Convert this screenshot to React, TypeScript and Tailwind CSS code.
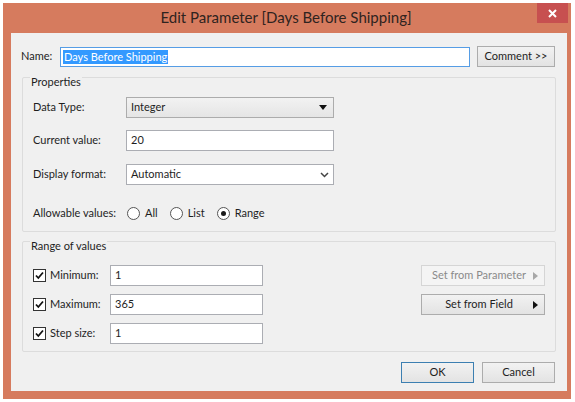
import React from 'react';

const font = { fontFamily: 'Lato, "Noto Sans", sans-serif' };

function TextBox({ value, className = '' }: { value: string; className?: string }) {
  return (
    <div className={`h-[21px] bg-white border border-[#abadb3] flex items-center pl-[4px] text-[#1e1e1e] ${className}`}>
      {value}
    </div>
  );
}

function Check({ label }: { label: string }) {
  return (
    <div className="flex items-center w-[77px] shrink-0 whitespace-nowrap">
      <div className="w-[13px] h-[13px] border border-[#333] bg-white flex items-center justify-center">
        <svg width="11" height="11" viewBox="0 0 11 11">
          <path d="M2 5.5 L4.3 8 L9 2.5" fill="none" stroke="#111" strokeWidth="1.8" />
        </svg>
      </div>
      <span className="ml-[4px]">{label}</span>
    </div>
  );
}

function Radio({ label, checked }: { label: string; checked?: boolean }) {
  return (
    <div className="flex items-center mr-[12px] whitespace-nowrap">
      <div className="w-[13px] h-[13px] rounded-full border border-[#555] bg-white flex items-center justify-center">
        {checked && <div className="w-[5px] h-[5px] rounded-full bg-[#1a1a1a]" />}
      </div>
      <span className="ml-[5px]">{label}</span>
    </div>
  );
}

function Btn({ children, className = '' }: { children: React.ReactNode; className?: string }) {
  return (
    <div
      className={`h-[21px] flex items-center justify-center border whitespace-nowrap bg-gradient-to-b from-[#f2f2f2] to-[#e3e3e3] ${className}`}
    >
      {children}
    </div>
  );
}

function Group({ title, className = '', children }: { title: string; className?: string; children: React.ReactNode }) {
  return (
    <div className={`relative border border-[#dcdcdc] rounded-[2px] ${className}`}>
      <span className="absolute left-[7px] -top-[4px] bg-[#f0f0f0] px-[1px] text-[#1e1e1e] whitespace-nowrap">{title}</span>
      {children}
    </div>
  );
}

export default function App() {
  return (
    <div className="w-[575px] h-[402px] bg-white overflow-hidden text-[11px] text-[#1e1e1e]" style={font}>
      <div className="ml-[3px] mt-[3px] w-[568px] h-[396px] bg-[#d67b5e] flex flex-col pl-[8px] pr-[4px] pb-[8px]">
        {/* title bar */}
        <div className="h-[30px] flex items-center relative -mr-[1px]">
          <div className="flex-1 text-center text-[15px] text-[#2e2320] -ml-[7px] pb-[1px]">
            Edit Parameter [Days Before Shipping]
          </div>
          <div className="absolute right-0 top-0 w-[31px] h-[20px] bg-[#c75050] flex items-center justify-center">
            <svg width="9" height="9" viewBox="0 0 9 9">
              <path d="M1 1 L8 8 M8 1 L1 8" stroke="#fff" strokeWidth="2" />
            </svg>
          </div>
        </div>

        {/* client area */}
        <div className="flex-1 bg-[#f0f0f0] flex flex-col pt-[13px] px-[11px]">
          <div className="flex items-center h-[21px]">
            <span className="w-[39px] -ml-[1px]">Name:</span>
            <div className="w-[410px] h-[20px] bg-white border border-[#569de5] flex items-center pl-[2px]">
              <span className="bg-[#3399ff] text-white leading-[14px] px-[1px]">Days Before Shipping</span>
            </div>
            <Btn className="ml-[7px] w-[78px] border-[#acacac]">Comment &gt;&gt;</Btn>
          </div>

          <Group title="Properties" className="mt-[10px] h-[155px] pt-[19px] pl-[10px]">
            <div className="flex items-center h-[21px]">
              <span className="w-[93px]">Data Type:</span>
              <div className="w-[208px] h-[21px] border border-[#acacac] bg-gradient-to-b from-[#f2f2f2] to-[#e5e5e5] flex items-center justify-between pl-[4px] pr-[6px]">
                <span>Integer</span>
                <svg width="8" height="5" viewBox="0 0 8 5">
                  <path d="M0 0 H8 L4 5 Z" fill="#111" />
                </svg>
              </div>
            </div>
            <div className="flex items-center h-[21px] mt-[12px]">
              <span className="w-[93px]">Current value:</span>
              <TextBox value="20" className="w-[208px]" />
            </div>
            <div className="flex items-center h-[21px] mt-[13px]">
              <span className="w-[93px]">Display format:</span>
              <div className="w-[208px] h-[21px] border border-[#abadb3] bg-white flex items-center justify-between pl-[4px] pr-[4px]">
                <span>Automatic</span>
                <svg width="9" height="6" viewBox="0 0 9 6">
                  <path d="M1 1 L4.5 4.5 L8 1" fill="none" stroke="#444" strokeWidth="1.5" />
                </svg>
              </div>
            </div>
            <div className="flex items-center h-[21px] mt-[18px]">
              <span className="w-[94px] whitespace-nowrap">Allowable values:</span>
              <Radio label="All" />
              <Radio label="List" />
              <Radio label="Range" checked />
            </div>
          </Group>

          <Group title="Range of values" className="mt-[9px] h-[111px] pt-[23px] pl-[10px] pr-[10px]">
            <div className="flex justify-between">
              <div className="flex flex-col">
                <div className="flex items-center h-[21px]">
                  <Check label="Minimum:" />
                  <TextBox value="1" className="w-[153px]" />
                </div>
                <div className="flex items-center h-[21px] mt-[8px]">
                  <Check label="Maximum:" />
                  <TextBox value="365" className="w-[153px]" />
                </div>
                <div className="flex items-center h-[21px] mt-[8px]">
                  <Check label="Step size:" />
                  <TextBox value="1" className="w-[153px]" />
                </div>
              </div>
              <div className="flex flex-col">
                <div className="w-[124px] h-[21px] flex items-center justify-center border border-[#d5d5d5] bg-[#f4f4f4] text-[#8a8a8a] relative whitespace-nowrap">
                  <span className="-ml-[8px]">Set from Parameter</span>
                  <svg className="absolute right-[6px]" width="5" height="8" viewBox="0 0 5 8">
                    <path d="M0 0 L5 4 L0 8 Z" fill="#a8a8a8" />
                  </svg>
                </div>
                <Btn className="w-[124px] mt-[8px] border-[#acacac] relative">
                  <span className="-ml-[8px]">Set from Field</span>
                  <svg className="absolute right-[6px]" width="5" height="8" viewBox="0 0 5 8">
                    <path d="M0 0 L5 4 L0 8 Z" fill="#111" />
                  </svg>
                </Btn>
              </div>
            </div>
          </Group>

          <div className="flex justify-end mt-[10px] pr-[1px]">
            <Btn className="w-[73px] border-[#3c7fb1]">OK</Btn>
            <Btn className="w-[73px] ml-[8px] border-[#acacac]">Cancel</Btn>
          </div>
        </div>
      </div>
    </div>
  );
}
